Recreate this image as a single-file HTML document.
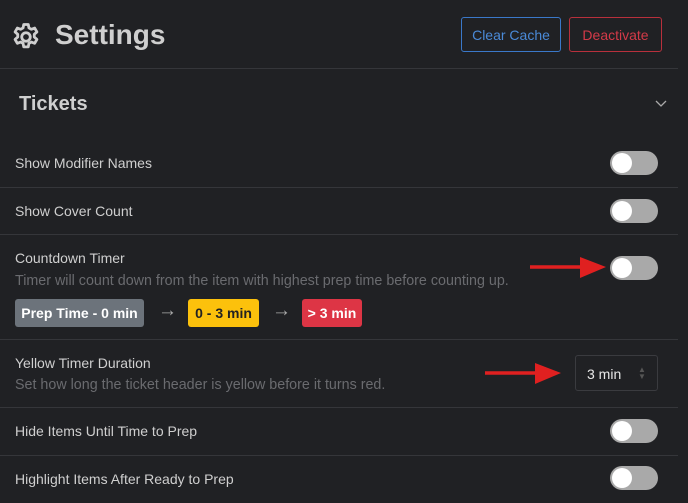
<!DOCTYPE html>
<html><head><style>
*{margin:0;padding:0;box-sizing:border-box}
body{width:688px;height:503px;background:#202124;font-family:"Liberation Sans",sans-serif;color:#d2d2d2;position:relative;overflow:hidden}
.a{position:absolute}
.hr{position:absolute;left:0;width:678px;height:1px;background:#35363a}
.lbl{position:absolute;left:15px;font-size:14px;color:#cfcfcf}
.sub{position:absolute;left:15px;font-size:14.3px;color:#6a6b6f}
.tg{position:absolute;left:610px;width:48px;height:24px;border-radius:12px;background:#a9a9a9}
.tg::after{content:"";position:absolute;left:2px;top:2px;width:20px;height:20px;border-radius:50%;background:#fff}
.btn{position:absolute;top:17px;height:35px;border:1px solid;border-radius:3px;font-size:14px;display:flex;align-items:center;justify-content:center}
.bd{position:absolute;top:299px;height:28px;border-radius:3px;font-size:14px;font-weight:bold;display:flex;align-items:center;justify-content:center}
</style></head><body>
<svg class="a" style="left:10px;top:21px" width="32" height="32" viewBox="0 0 24 24" fill="none" stroke="#cfcfcf" stroke-width="2.1" stroke-linejoin="round"><path d="M10.3 2.6h3.4l.5 2.6 1.8 1 2.5-.9 1.7 2.9-2 1.8v2l2 1.8-1.7 2.9-2.5-.9-1.8 1-.5 2.6h-3.4l-.5-2.6-1.8-1-2.5.9-1.7-2.9 2-1.8v-2l-2-1.8 1.7-2.9 2.5.9 1.8-1z"/><circle cx="12" cy="12" r="3.2"/></svg>
<div class="a" style="left:55px;top:19px;font-size:28px;font-weight:bold;color:#cfcfcf">Settings</div>
<div class="btn" style="left:461px;width:100px;border-color:#3a78c9;color:#4a8ad8">Clear Cache</div>
<div class="btn" style="left:569px;width:93px;border-color:#b8303c;color:#d33a48">Deactivate</div>
<div class="hr" style="top:68px"></div>
<div class="a" style="left:19px;top:93px;font-size:20px;font-weight:bold;color:#cfcfcf">Tickets</div>
<svg class="a" style="left:655px;top:100px" width="12" height="8" viewBox="0 0 12 8"><path d="M1 1l5 5 5-5" fill="none" stroke="#aaa" stroke-width="1.3"/></svg>
<div class="lbl" style="top:155px">Show Modifier Names</div><div class="tg" style="top:151px"></div>
<div class="hr" style="top:187px"></div>
<div class="lbl" style="top:203px">Show Cover Count</div><div class="tg" style="top:199px"></div>
<div class="hr" style="top:234px"></div>
<div class="lbl" style="top:250px">Countdown Timer</div>
<div class="sub" style="top:273px">Timer will count down from the item with highest prep time before counting up.</div>
<div class="tg" style="top:256px"></div>
<div class="bd" style="left:15px;width:129px;background:#6c737b;color:#fff">Prep Time - 0 min</div>
<div class="a" style="left:158px;top:300px;font-size:19px;color:#aaa">→</div>
<div class="bd" style="left:188px;width:71px;background:#fcc10c;color:#222">0 - 3 min</div>
<div class="a" style="left:272px;top:300px;font-size:19px;color:#aaa">→</div>
<div class="bd" style="left:302px;width:60px;background:#dd3545;color:#fff">&gt; 3 min</div>
<div class="hr" style="top:339px"></div>
<div class="lbl" style="top:355px">Yellow Timer Duration</div>
<div class="sub" style="top:377px">Set how long the ticket header is yellow before it turns red.</div>
<div class="a" style="left:575px;top:355px;width:83px;height:36px;border:1px solid #3a3b3f;border-radius:3px;font-size:14px;color:#e8e8e8;padding:10px 0 0 11px">3 min<span style="position:absolute;left:62px;top:10px;font-size:8px;color:#555;line-height:7px">▲<br>▼</span></div>
<div class="hr" style="top:407px"></div>
<div class="lbl" style="top:423px">Hide Items Until Time to Prep</div><div class="tg" style="top:419px"></div>
<div class="hr" style="top:455px"></div>
<div class="lbl" style="top:471px">Highlight Items After Ready to Prep</div><div class="tg" style="top:466px"></div>
<svg class="a" style="left:528px;top:255px" width="80" height="26"><path d="M2 12h52" stroke="#e02020" stroke-width="3.5"/><path d="M52 2l26 10-26 11z" fill="#e02020"/></svg>
<svg class="a" style="left:483px;top:360px" width="80" height="26"><path d="M2 13h52" stroke="#e02020" stroke-width="3.5"/><path d="M52 3l26 10-26 11z" fill="#e02020"/></svg>
</body></html>
